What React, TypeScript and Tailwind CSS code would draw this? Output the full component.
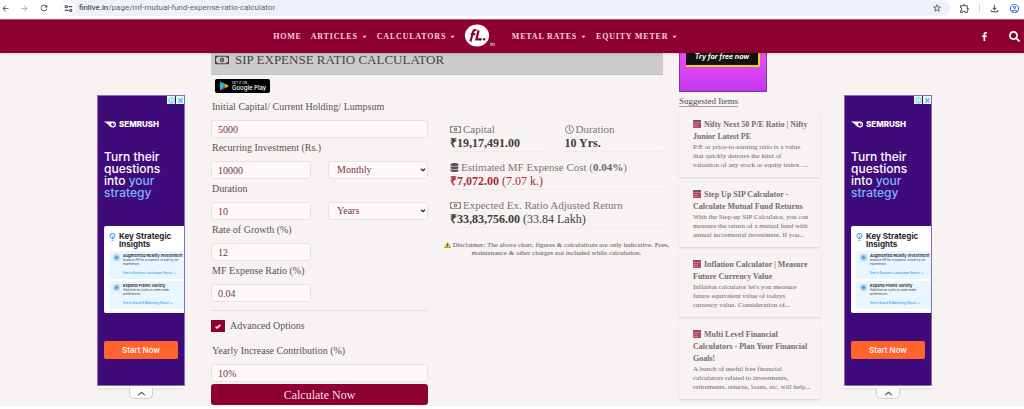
import type { ReactNode } from "react";
import { FaCaretDown, FaDatabase, FaFacebookF, FaRegClock, FaRegMoneyBillAlt, FaSearch } from "react-icons/fa";
import { MdArrowBack, MdArrowForward, MdOutlineAccountCircle, MdOutlineExtension, MdOutlineFileDownload, MdRefresh, MdStarOutline } from "react-icons/md";

const navLeft = [
  { label: "HOME", menu: false },
  { label: "ARTICLES", menu: true },
  { label: "CALCULATORS", menu: true },
];

const navRight = [
  { label: "METAL RATES", menu: true },
  { label: "EQUITY METER", menu: true },
];

const suggestions = [
  { title: "Nifty Next 50 P/E Ratio | Nifty Junior Latest PE", text: "P/E or price-to-earning ratio is a value\nthat quickly denotes the kind of\nvaluation of any stock or equity index. ..." },
  { title: "Step Up SIP Calculator - Calculate Mutual Fund Returns", text: "With the Step-up SIP Calculator, you can\nmeasure the return of a mutual fund with\nannual incremental investment. If you..." },
  { title: "Inflation Calculator | Measure Future Currency Value", text: "Inflation calculator let's you measure\nfuture equivalent value of todays\ncurrency value. Consideration of..." },
  { title: "Multi Level Financial Calculators - Plan Your Financial Goals!", text: "A bunch of useful free financial\ncalculators related to investments,\nretirements, returns, loans, etc. will help..." },
];

const insights = [
  { title: "Augmented Reality Investment", text: "Improve AR for a superior virtual try-on experience.", link: "See in Business Landscape Report →" },
  { title: "Expand Frame Variety", text: "Add diverse styles to meet wider preferences.", link: "See in Brand & Marketing Report →" },
];

const fieldClass = "block h-[18px] w-full min-w-0 rounded-[3px] border border-[#f0dde1] bg-[#fef9f8] text-[10px] leading-4 text-[#74304a] outline-none";

function BrowserBar() {
  return (
    <div className="flex h-[19px] items-start bg-white text-[#474b50]">
      <div className="flex h-4 items-center gap-[10px] pl-px pr-[11px]">
        <button aria-label="Back"><MdArrowBack className="size-[9px]" /></button>
        <button aria-label="Forward" className="text-[#a0a3a8]"><MdArrowForward className="size-[9px]" /></button>
        <button aria-label="Reload"><MdRefresh className="size-[10px]" /></button>
      </div>
      <div className="flex h-4 flex-1 items-center rounded-r-full rounded-l-full bg-[#ecf1fb] pl-px pr-2">
        <span className="flex size-[14px] items-center justify-center rounded-full bg-white">
          <svg viewBox="0 0 12 12" className="size-[9px]" fill="none" stroke="currentColor" strokeWidth="1.5">
            <circle cx="3" cy="3.5" r="1.5" />
            <path d="M6 3.5h5M1 8.5h5" />
            <circle cx="9" cy="8.5" r="1.5" />
          </svg>
        </span>
        <span className="flex-1 pl-1 text-[8px] leading-4 text-[#5f6368]">
          <span className="text-[#1f2024]">finlive.in</span>/page/mf-mutual-fund-expense-ratio-calculator
        </span>
        <button aria-label="Bookmark"><MdStarOutline className="size-[10px]" /></button>
      </div>
      <div className="flex h-4 items-center pl-[9px] pr-1">
        <button aria-label="Extensions"><MdOutlineExtension className="size-[11px]" /></button>
        <span className="mx-[9px] h-2 w-px bg-[#c9d7f5]" />
        <button aria-label="Downloads"><MdOutlineFileDownload className="size-[11px]" /></button>
        <button aria-label="Profile" className="ml-[9px] text-[#3f74d8]"><MdOutlineAccountCircle className="size-[11px]" /></button>
      </div>
    </div>
  );
}

function NavItem({ label, menu }: { label: string; menu: boolean }) {
  return (
    <a href="#" className="flex items-center gap-[3px] text-[8px] font-bold tracking-widest whitespace-nowrap text-[#f4d3de]">
      {label}
      {menu && <FaCaretDown className="size-[7px]" />}
    </a>
  );
}

function Navbar() {
  return (
    <nav className="relative z-10 flex h-[34px] items-center border-t border-[#a85a70] bg-[#8d0031] shadow-sm">
      <div className="flex flex-1 items-center justify-end gap-[9px]">
        {navLeft.map((item) => <NavItem key={item.label} {...item} />)}
      </div>
      <a href="#" aria-label="finlive.in" className="flex items-end pb-[3px] pl-2 text-white">
        <svg viewBox="0 0 26 24" className="h-[23px] w-[26px]">
          <ellipse cx="13" cy="12" rx="12.6" ry="11.5" fill="#fff" />
          <g fill="none" stroke="#8d0031" strokeWidth="2.3">
            <path d="M6.2 18.2 8.8 8.6c.5-2 1.7-2.7 3.6-2.2M6.6 10.5h4.6" />
            <path d="M14.6 6.5 12.4 16h5.6" />
          </g>
          <circle cx="20.5" cy="15.8" r="1.3" fill="#8d0031" />
        </svg>
        <span className="font-[Liberation_Sans,sans-serif] text-[6px] leading-[6px]">in</span>
      </a>
      <div className="flex flex-1 items-center gap-[9px] pl-[17px]">
        {navRight.map((item) => <NavItem key={item.label} {...item} />)}
      </div>
      <div className="flex w-14 items-center justify-end gap-5 pr-1 text-white">
        <a href="#" aria-label="Facebook"><FaFacebookF className="size-[9px]" /></a>
        <button aria-label="Search"><FaSearch className="size-[11px]" /></button>
      </div>
    </nav>
  );
}

function SemrushAd() {
  return (
    <aside className="mt-[42px] w-[88px] shrink-0 font-[Inter,sans-serif]">
      <div className="border border-[#8b6bb0] bg-[#3f0b7b] pb-[26px]">
        <div className="flex h-2 justify-end gap-px">
          <span className="flex w-2 items-center justify-center bg-[#e9f8fb]">
            <svg viewBox="0 0 10 10" className="size-[7px]" fill="none" stroke="#2bb5d6">
              <circle cx="5" cy="5" r="4" />
              <path d="M5 4.5v3M5 2.5v1" />
            </svg>
          </span>
          <button aria-label="Close ad" className="flex w-2 items-center justify-center bg-[#e9f8fb]">
            <svg viewBox="0 0 10 10" className="size-[7px]" fill="none" stroke="#2bb5d6" strokeWidth="1.5"><path d="m2 2 6 6M8 2 2 8" /></svg>
          </button>
        </div>
        <div className="mt-[15px] flex items-center gap-[2px] pl-[6px] text-white">
          <svg viewBox="0 0 26 14" className="h-[7px] w-[13px]">
            <path d="M0 1h18a6 6 0 0 1 0 12c-4 0-6-1.5-7.5-4L6 7.5h4L5 4.5z" fill="#fff" />
            <circle cx="18" cy="7" r="3.6" fill="#3f0b7b" />
            <path d="M18 4.5A2.5 2.5 0 0 1 20.5 7H18z" fill="#fff" />
          </svg>
          <span className="text-[8px] leading-[10px] font-extrabold">SEMRUSH</span>
        </div>
        <p className="mt-[22px] pl-[6px] text-[12px] leading-3 font-medium text-white">
          Turn their<br />questions<br />into <span className="text-[#7cb5f8]">your<br />strategy</span>
        </p>
        <div className="mt-[27px] ml-[6px] overflow-hidden rounded-l-[2px] bg-white pt-[6px] pl-[5px]">
          <div className="flex gap-[3px]">
            <svg viewBox="0 0 12 16" className="mt-px h-[8px] w-[7px]" fill="#d5ecff" stroke="#3ba0f4" strokeWidth="2">
              <path d="M4 11C1 9 1 6 1 5.5a5 5 0 0 1 10 0C11 8 9.5 9 8 11zM4 14.5h4M6 7v4" />
            </svg>
            <p className="text-[8px] leading-2 font-bold text-[#24242e]">Key Strategic<br />Insights</p>
          </div>
          <div className="mt-[3px] flex flex-col gap-[2px]">
            {insights.map((item) => (
              <div key={item.title} className="flex h-7 gap-[3px] overflow-hidden rounded-l-[3px] bg-[#e9f5ff] pt-[2px] pl-[4px]">
                <span className="mt-px flex size-[7px] shrink-0 items-center justify-center rounded-full bg-[#a9d4f7]">
                  <span className="size-[3px] rounded-full bg-[#4b93cf]" />
                </span>
                <div className="text-[3px] leading-[4px] text-[#3b3b45]">
                  <p className="text-[4px] leading-[5px] font-semibold whitespace-nowrap text-[#24242e]">{item.title}</p>
                  <p className="w-[56px]">{item.text}</p>
                  <a href="#" className="mt-[5px] block font-medium whitespace-nowrap text-[#2b9df4]">{item.link}</a>
                </div>
              </div>
            ))}
            <div className="h-[2px] bg-[#e9f5ff]" />
          </div>
        </div>
        <div className="mt-7 px-[6px]">
          <button className="block h-[18px] w-full rounded-[2px] bg-[#ff642d] text-[8px] leading-[18px] font-medium text-white">Start Now</button>
        </div>
      </div>
      <div className="h-[2px] bg-white shadow-sm" />
      <button aria-label="Collapse ad" className="mx-auto flex h-[11px] w-6 items-center justify-center rounded-b-[5px] border border-t-0 border-[#cfcfcf] bg-[#fafafa]">
        <svg viewBox="0 0 10 6" className="h-[5px] w-[9px]" fill="none" stroke="#555" strokeWidth="1.4"><path d="m1 5 4-3.5L9 5" /></svg>
      </button>
    </aside>
  );
}

function Field({ id, label, value, children }: { id: string; label: string; value: string; children?: ReactNode }) {
  return (
    <div>
      <label htmlFor={id} className="block h-[23px] pl-px text-[10px] leading-5">{label}</label>
      <div className="flex gap-[17px]">
        <div className="flex-1">
          <input id={id} defaultValue={value} className={`${fieldClass} px-[6px]`} />
        </div>
        {children}
      </div>
    </div>
  );
}

function Unit({ label, value }: { label: string; value: string }) {
  return (
    <div className="relative flex-1">
      <select aria-label={label} className={`${fieldClass} appearance-none px-2`}>
        <option>{value}</option>
      </select>
      <svg viewBox="0 0 8 6" className="pointer-events-none absolute top-[7px] right-[2px] h-[4px] w-[6px]" fill="none" stroke="#4d1a2b" strokeWidth="2"><path d="m1 1 3 3 3-3" /></svg>
    </div>
  );
}

function Calculator() {
  return (
    <form className="w-[217px] shrink-0 text-[#5f5053]" onSubmit={(e) => e.preventDefault()}>
      <a href="#" aria-label="Get it on Google Play" className="mt-1 ml-1 flex h-[14px] w-[55px] items-center gap-[3px] rounded-[2px] bg-black pl-1 font-[Inter,sans-serif] text-white">
        <svg viewBox="0 0 20 22" className="h-[10px] w-[10px]">
          <path d="M1 1v20l10-10z" fill="#22b8f0" />
          <path d="m1 1 10 10 4-4z" fill="#12d67b" />
          <path d="m1 21 10-10 4 4z" fill="#f13d4e" />
          <path d="m15 7-4 4 4 4 5-4z" fill="#fdc60b" />
        </svg>
        <span>
          <span className="block text-[3px] leading-[4px]">GET IT ON</span>
          <span className="block text-[6px] leading-[6px] font-medium whitespace-nowrap">Google Play</span>
        </span>
      </a>
      <div className="mt-1">
        <Field id="capital" label="Initial Capital/ Current Holding/ Lumpsum" value="5000" />
        <Field id="recurring" label="Recurring Investment (Rs.)" value="10000">
          <Unit label="Frequency" value="Monthly" />
        </Field>
        <Field id="duration" label="Duration" value="10">
          <Unit label="Duration unit" value="Years" />
        </Field>
        <div className="w-[100px]">
          <Field id="growth" label="Rate of Growth (%)" value="12" />
          <Field id="expense" label="MF Expense Ratio (%)" value="0.04" />
        </div>
      </div>
      <hr className="mt-2 border-[#e4dfdf]" />
      <label className="mt-2 mb-2 flex items-center gap-[5px] text-[10px] leading-[14px]">
        <input type="checkbox" defaultChecked className="peer sr-only" />
        <span className="flex h-3 w-[14px] items-center justify-center bg-[#8d0031]">
          <svg viewBox="0 0 10 8" className="h-[5px] w-[6px]" fill="none" stroke="#fff" strokeWidth="2.5"><path d="m1 4 2.5 2.5L9 1" /></svg>
        </span>
        Advanced Options
      </label>
      <Field id="increase" label="Yearly Increase Contribution (%)" value="10%" />
      <button className="mt-[2px] block h-[21px] w-full rounded-[3px] bg-[#8d0031] text-[12px] leading-5 text-[#f7dfe7]">Calculate Now</button>
    </form>
  );
}

function Result({ icon, label, children }: { icon: ReactNode; label: ReactNode; children: ReactNode }) {
  return (
    <div className="mb-2 flex-1 border-b border-[#efebea] pb-px">
      <p className="flex items-center gap-[2px] text-[11px] leading-[14px] text-[#7d7476]">{icon}<span>{label}</span></p>
      <div className="text-[12px] leading-[14px] text-[#3d3d3d]">{children}</div>
    </div>
  );
}

function Results() {
  return (
    <div className="flex-1 pt-[47px]">
      <div className="flex gap-4">
        <Result icon={<FaRegMoneyBillAlt className="size-[11px]" />} label="Capital"><b>₹19,17,491.00</b></Result>
        <Result icon={<FaRegClock className="size-[9px]" />} label="Duration"><b>10 Yrs.</b></Result>
      </div>
      <Result icon={<FaDatabase className="size-[9px] text-[#555]" />} label={<>Estimated MF Expense Cost (<b className="text-[#666]">0.04%</b>)</>}>
        <span className="text-[#a92b3a]"><b>₹7,072.00</b> (7.07 k.)</span>
      </Result>
      <Result icon={<FaRegMoneyBillAlt className="size-[11px]" />} label="Expected Ex. Ratio Adjusted Return">
        <b>₹33,83,756.00</b> (33.84 Lakh)
      </Result>
      <p className="-mx-2 pt-[5px] text-center text-[7px] leading-2 text-[#5f5053]">
        <svg viewBox="0 0 14 12" className="mr-[2px] inline h-[6px] w-[7px]"><path d="M7 1 13 11H1z" fill="#f2cf18" stroke="#8a7410" strokeWidth="1.2" /><path d="M7 4v4M7 9v1" stroke="#222" strokeWidth="1.5" /></svg>
        Disclaimer: The above chart, figures &amp; calculations are only indicative. Fees,<br />
        maintenance &amp; other charges not included while calculation.
      </p>
    </div>
  );
}

function Sidebar() {
  return (
    <aside className="w-[141px] shrink-0 text-[#6e6668]">
      <div className="h-[39px] w-[88px] border border-t-0 border-[#7a3a96] bg-linear-to-b from-[#ef4cf4] to-[#c438f2] px-[6px]">
        <a href="#" className="block h-[14px] border-r-2 border-b-2 border-[#e6d813] bg-[#111] text-center font-[Inter,sans-serif] text-[7px] leading-2 font-bold text-white italic">Try for free now</a>
      </div>
      <h2 className="mt-1 w-fit border-b border-[#d08a9d] text-[9px] leading-[10px] text-[#4f484a]">Suggested Items</h2>
      <div className="mt-[6px] flex flex-col gap-[6px]">
        {suggestions.map((item) => (
          <a key={item.title} href="#" className="block pt-[6px] pr-1 pb-[7px] pl-[14px] shadow-[0_1px_2px_#d8d3d3]">
            <h3 className="pr-2 text-[8px] leading-3 font-bold text-[#756c6f]">
              <svg viewBox="0 0 8 8" className="mr-[3px] inline size-[8px] align-[-1px]">
                <rect width="8" height="8" rx="0.6" fill="#b8446c" />
                <path d="M0 0h8v2H0z" fill="#8a4a78" />
                <path d="M0 2.5h8M0 4.7h5M0 6.5h5" stroke="#e0a3b8" strokeWidth="0.5" />
              </svg>
              {item.title}
            </h3>
            <p className="text-[7px] leading-[9px] whitespace-pre-line">{item.text}</p>
          </a>
        ))}
      </div>
    </aside>
  );
}

export default function App() {
  return (
    <div className="bg-[#f6f3f2] font-['Liberation_Serif',serif]">
      <div className="font-[Roboto,sans-serif]"><BrowserBar /></div>
      <Navbar />
      <div className="pb-px pl-[5px]">
        <main className="mx-auto flex w-full max-w-[835px] items-start">
          <SemrushAd />
          <article className="ml-[26px] flex-1">
            <h1 className="flex h-[22px] items-start gap-[6px] border-b border-[#c3c1c1] bg-[#cdcccc] pl-1 text-[13px] leading-[14px] text-[#454545]">
              <FaRegMoneyBillAlt className="size-[14px]" />
              SIP EXPENSE RATIO CALCULATOR
            </h1>
            <div className="flex gap-[22px]">
              <Calculator />
              <Results />
            </div>
          </article>
          <div className="ml-4"><Sidebar /></div>
          <div className="ml-6"><SemrushAd /></div>
        </main>
      </div>
    </div>
  );
}
